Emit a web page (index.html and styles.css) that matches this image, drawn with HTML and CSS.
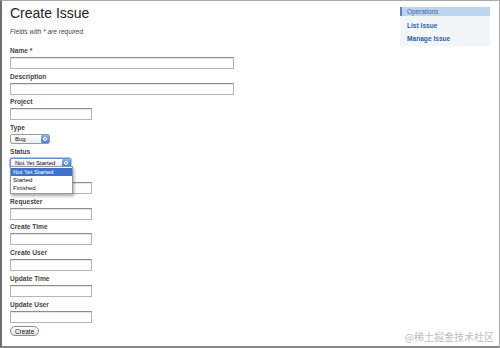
FILE: index.html
```html
<!DOCTYPE html>
<html lang="en">
<head>
    <meta charset="UTF-8">
    <title>Create Issue</title>
    <link rel="stylesheet" href="styles.css">
</head>
<body>
<div class="window">
    <div class="main">
        <h1>Create Issue</h1>
        <p class="note">Fields with * are required.</p>

        <div class="field"><label>Name *</label><div class="input wide"></div></div>
        <div class="field"><label>Description</label><div class="input wide"></div></div>
        <div class="field"><label>Project</label><div class="input"></div></div>
        <div class="field select-field">
            <label>Type</label>
            <div class="select type-select"><span>Bug</span><i class="arrows"></i></div>
        </div>
        <div class="field select-field">
            <label>Status</label>
            <div class="select status-select focused"><span>Not Yet Started</span><i class="arrows"></i></div>
            <ul class="options">
                <li class="picked">Not Yet Started</li>
                <li>Started</li>
                <li>Finished</li>
            </ul>
        </div>
        <!-- label of this row is hidden under the open status list -->
        <div class="field"><label class="covered"></label><div class="input"></div></div>
        <div class="field"><label>Requester</label><div class="input"></div></div>
        <div class="field"><label>Create Time</label><div class="input"></div></div>
        <div class="field"><label>Create User</label><div class="input"></div></div>
        <div class="field"><label>Update Time</label><div class="input"></div></div>
        <div class="field"><label>Update User</label><div class="input"></div></div>

        <button class="btn">Create</button>
    </div>

    <div class="sidebar">
        <div class="side-head">Operations</div>
        <ul class="side-menu">
            <li>List Issue</li>
            <li>Manage Issue</li>
        </ul>
    </div>

    <div class="watermark">@稀土掘金技术社区</div>
</div>
</body>
</html>
```

FILE: styles.css
```css
body {
    margin: 0;
    font-family: "Liberation Sans", Arial, sans-serif;
    color: #333;
}
.window {
    position: relative;
    box-sizing: border-box;
    width: 500px;
    height: 348px;
    border-top: 1px solid #a8a8a8;
    border-left: 2px solid #707070;
    border-right: 1px solid #b0b0b0;
    border-bottom: 2px solid #858585;
    background: #fff;
    display: flex;
    justify-content: space-between;
    overflow: hidden;
}
.main {
    padding: 4px 0 0 8px;
    width: 300px;
}
h1 {
    font-size: 14px;
    line-height: 16px;
    font-weight: normal;
    color: #222;
    margin: 0;
}
.note {
    font-size: 6.6px;
    line-height: 8px;
    font-style: italic;
    color: #444;
    margin: 7px 0 11px;
}
.field {
    position: relative;
    margin-bottom: 3.7px;
}
.field label {
    display: block;
    height: 8px;
    font-size: 6.6px;
    line-height: 8px;
    font-weight: bold;
    color: #444;
    margin-bottom: 2px;
}
.input {
    box-sizing: border-box;
    width: 82px;
    height: 12px;
    border: 1px solid #b4b4b4;
    border-top-color: #8c8c8c;
    box-shadow: inset 0 1px 1px #e4e4e4;
    background: #fff;
}
.input.wide {
    width: 224px;
}
.select-field {
    margin-bottom: 4px;
}
.select {
    box-sizing: border-box;
    height: 10px;
    border: 1px solid #9a9a9a;
    border-radius: 2px;
    background: linear-gradient(#fff, #ececec);
    display: flex;
    align-items: center;
    font-size: 6px;
    color: #111;
    padding-left: 4px;
}
.select span {
    flex: 1;
}
.select .arrows {
    width: 8px;
    height: 8px;
    border-radius: 1px;
    background: linear-gradient(#8fb5e6, #4b7fcf);
    position: relative;
}
.select .arrows::before {
    content: "";
    position: absolute;
    left: 2px;
    top: 2px;
    width: 2px;
    height: 2px;
    border: 1px solid #fff;
    border-radius: 50%;
}
.type-select {
    width: 40px;
}
.status-select {
    width: 61px;
}
.focused {
    border-color: #5f8fd6;
    box-shadow: 0 0 0 1px #a8c6ee;
}
.options {
    position: absolute;
    left: 0;
    top: 18px;
    z-index: 2;
    width: 61px;
    margin: 0;
    padding: 1px 0;
    list-style: none;
    background: #fff;
    border: 1px solid #9a9a9a;
    box-shadow: 1px 2px 3px rgba(0, 0, 0, 0.35);
    font-size: 6px;
    line-height: 8px;
    color: #111;
}
.options li {
    padding-left: 2px;
}
.options .picked {
    background: #3d73cf;
    color: #fff;
}
.btn {
    display: block;
    margin-top: 2px;
    font-family: inherit;
    font-size: 6.4px;
    line-height: 7px;
    padding: 0 4px;
    height: 10px;
    border: 1px solid #8a8a8a;
    border-radius: 6px;
    background: linear-gradient(#fff, #e6e6e6);
    color: #111;
}
.sidebar {
    margin: 6px 9px 0 0;
    width: 90px;
    height: 39px;
    background: #f3f6f9;
}
.side-head {
    height: 9px;
    line-height: 9px;
    background: #bcd4ee;
    border-left: 2px solid #5a86c4;
    padding-left: 5px;
    font-size: 6.4px;
    color: #3a69a3;
}
.side-menu {
    list-style: none;
    margin: 0;
    padding: 4px 0 0 7px;
}
.side-menu li {
    font-size: 6.6px;
    line-height: 12.5px;
    font-weight: bold;
    color: #2f5ea8;
}
.watermark {
    position: absolute;
    right: 5px;
    bottom: 3px;
    font-family: "Noto Sans CJK SC", sans-serif;
    font-size: 10px;
    line-height: 12px;
    color: #bdbdbd;
}
```
